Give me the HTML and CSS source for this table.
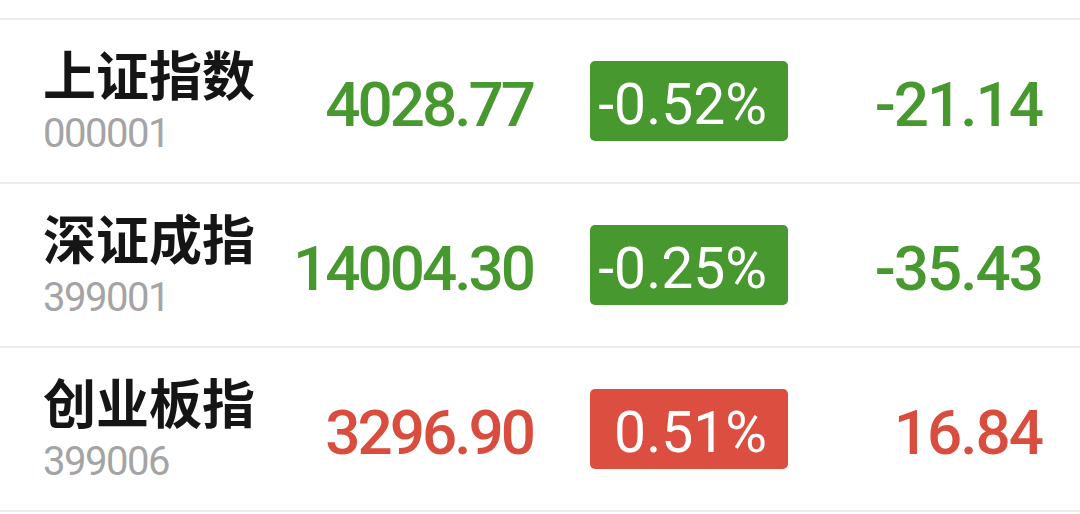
FILE: index.html
```html
<!DOCTYPE html>
<html lang="zh-CN">
<head>
<meta charset="utf-8">
<title>指数</title>
<link rel="stylesheet" href="styles.css">
</head>
<body>
<div class="list">
  <div class="row">
    <div class="name-cell">
      <div class="name">上证指数</div>
      <div class="code">000001</div>
    </div>
    <div class="price down">4028.77</div>
    <div class="badge badge-down">-0.52%</div>
    <div class="change down">-21.14</div>
  </div>
  <div class="row">
    <div class="name-cell">
      <div class="name">深证成指</div>
      <div class="code">399001</div>
    </div>
    <div class="price down">14004.30</div>
    <div class="badge badge-down">-0.25%</div>
    <div class="change down">-35.43</div>
  </div>
  <div class="row">
    <div class="name-cell">
      <div class="name">创业板指</div>
      <div class="code">399006</div>
    </div>
    <div class="price up">3296.90</div>
    <div class="badge badge-up">0.51%</div>
    <div class="change up">16.84</div>
  </div>
</div>
</body>
</html>
```
FILE: styles.css
```css
html, body {
  margin: 0;
  padding: 0;
  background: #ffffff;
}

.list {
  padding-top: 18px;
}

.row {
  display: grid;
  grid-template-columns: 230px 260px 255px 254px;
  align-items: center;
  height: 162px;
  padding-left: 43px;
  border-top: 2px solid #ececec;
}

.row:last-child {
  border-bottom: 2px solid #ececec;
}

.name-cell {
  display: flex;
  flex-direction: column;
  padding-bottom: 5px;
}

.name {
  font-family: "Noto Sans CJK SC", sans-serif;
  font-weight: 700;
  font-size: 53px;
  line-height: 60px;
  color: #151515;
  white-space: nowrap;
}

.code {
  font-family: Roboto, sans-serif;
  font-size: 40px;
  line-height: 40px;
  letter-spacing: -1.5px;
  color: #a4a4a4;
  margin-top: 11px;
}

.price, .change {
  font-family: Roboto, sans-serif;
  font-weight: 500;
  font-size: 62px;
  text-align: right;
  padding-top: 6px;
}

.price {
  letter-spacing: -3px;
}

.change {
  letter-spacing: -2px;
}

.badge {
  margin-left: 57px;
  width: 198px;
  height: 80px;
  box-sizing: border-box;
  border-radius: 5px;
  display: flex;
  align-items: center;
  justify-content: flex-end;
  padding: 6px 21px 0 0;
  font-family: Roboto, sans-serif;
  font-size: 57px;
  color: #ffffff;
}

.down { color: #47982f; }
.up { color: #d94d3e; }

.badge-down { background: #47982f; }
.badge-up { background: #dc4f40; }
```
